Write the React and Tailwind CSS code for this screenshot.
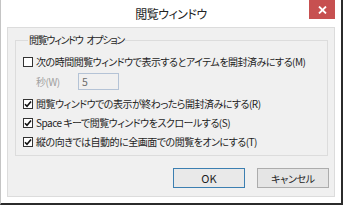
import React from 'react';

const font = { fontFamily: '"Noto Sans CJK JP", "Noto Sans", sans-serif' };

const Check = ({ checked }) => (
  <span className="flex h-[10px] w-[10px] shrink-0 items-center justify-center border border-[#333] bg-white">
    {checked && (
      <svg width="8" height="8" viewBox="0 0 8 8">
        <path d="M1 4.2 L3 6.3 L7 1.4" fill="none" stroke="#111" strokeWidth="1.6" />
      </svg>
    )}
  </span>
);

const Row = ({ checked, children }) => (
  <div className="flex h-[19px] items-center gap-[3px]">
    <Check checked={checked} />
    <span className="whitespace-nowrap text-[10px] leading-none tracking-[-0.5px] text-[#1e1e1e] [font-feature-settings:'palt']">{children}</span>
  </div>
);

const App = () => {
  return (
    <div
      className="flex h-[205px] w-[343px] flex-col border-b-2 border-l border-r-2 border-b-[#2b2b2b] border-l-[#c4c4c4] border-r-[#2b2b2b] bg-white"
      style={font}
    >
      <div className="relative flex h-[27px] shrink-0 items-center justify-center">
        <span className="text-[12px] tracking-[-0.5px] text-[#222] [font-feature-settings:'palt']">閲覧ウィンドウ</span>
        <div className="absolute right-[6px] top-0 flex h-[19px] w-[26px] items-center justify-center bg-[#c75050]">
          <svg width="9" height="8" viewBox="0 0 9 8">
            <path d="M1 0.5 L8 7.5 M8 0.5 L1 7.5" stroke="#fff" strokeWidth="1.8" />
          </svg>
        </div>
      </div>

      <div className="mx-[6px] flex h-[170px] flex-col border border-[#dcdcdc] bg-[#f0f0f0]">
        <fieldset className="ml-[7px] mt-[5px] h-[123px] w-[313px] border border-[#dcdcdc] pl-[7px]">
          <legend className="ml-[5px] whitespace-nowrap px-[1px] text-[10px] leading-[14px] tracking-[-1.3px] text-[#1e1e1e] [font-feature-settings:'palt']">
            閲覧ウィンドウ<span className="ml-[4px]">オプション</span>
          </legend>
          <div className="mt-[5px] flex flex-col">
            <Row checked={false}>次の時間閲覧ウィンドウで表示するとアイテムを開封済みにする(M)</Row>
            <div className="flex h-[21px] items-center pl-[13px]">
              <span className="w-[42px] whitespace-nowrap text-[10px] leading-none tracking-[-0.5px] text-[#a0a0a0] [font-feature-settings:'palt']">秒(W)</span>
              <div className="flex h-[17px] w-[41px] items-center border border-[#b4c3d6] bg-[#f0f0f0] pl-[3px] text-[10.5px] text-[#6d6d6d]">
                5
              </div>
            </div>
            <div className="mt-[2px]" />
            <Row checked>閲覧ウィンドウでの表示が終わったら開封済みにする(R)</Row>
            <Row checked>Space キーで閲覧ウィンドウをスクロールする(S)</Row>
            <Row checked>縦の向きでは自動的に全画面での閲覧をオンにする(T)</Row>
          </div>
        </fieldset>

        <div className="mt-[12px] flex justify-end gap-[12px] pr-[5px]">
          <button className="flex h-[20px] w-[72px] items-center justify-center border border-[#3c7fb1] bg-[#e9e9e9] text-[11px] text-[#1e1e1e]">
            OK
          </button>
          <button className="flex h-[20px] w-[72px] items-center justify-center border border-[#acacac] bg-[#e5e5e5] text-[10px] tracking-[-0.3px] text-[#1e1e1e] [font-feature-settings:'palt']">
            キャンセル
          </button>
        </div>
      </div>
    </div>
  );
};

export default App;
